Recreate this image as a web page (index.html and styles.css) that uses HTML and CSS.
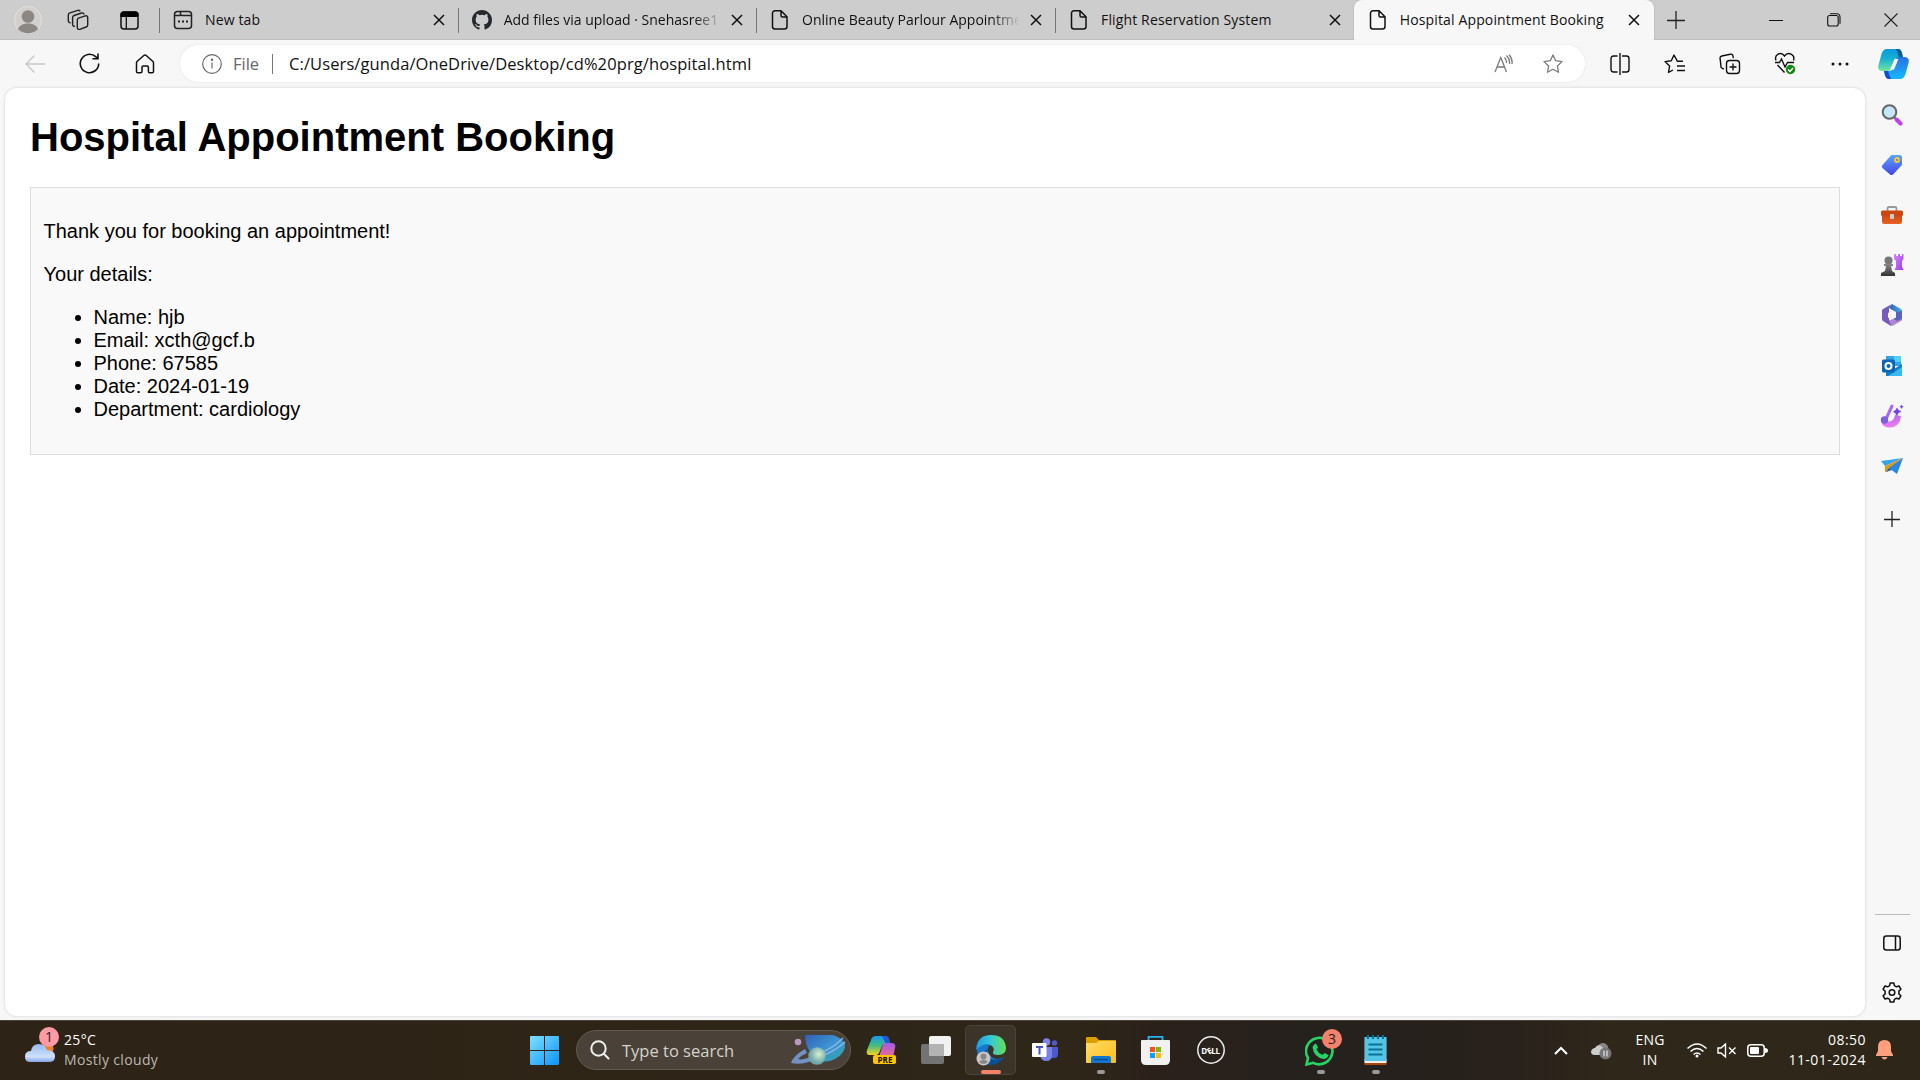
FILE: index.html
```html
<!DOCTYPE html>
<html lang="en">
<head>
<meta charset="utf-8">
<title>Hospital Appointment Booking</title>
<link rel="stylesheet" href="styles.css">
</head>
<body>
<svg width="0" height="0" class="defs">
  <defs>
    <symbol id="doc" viewBox="0 0 18 22"><path d="M4 1.8h6l6 6V17.500a2.500 2.500 0 0 1-2.500 2.500H4a2.500 2.500 0 0 1-2.500-2.500V4.300A2.500 2.500 0 0 1 4 1.800zM10 2v4.500A1.500 1.500 0 0 0 11.500 8H16" fill="none" stroke="#111" stroke-width="1.500"/></symbol>
    <symbol id="x" viewBox="0 0 12 12"><path d="M1 1l10 10M11 1L1 11" stroke="#111" stroke-width="1.500"/></symbol>
    <linearGradient id="gb" x1="0" y1="0" x2="1" y2="1"><stop offset="0" stop-color="#7fe0ff"/><stop offset="1" stop-color="#0a94fb"/></linearGradient>
    <linearGradient id="gc1" x1="0" y1="0" x2="0" y2="1"><stop offset="0" stop-color="#0a9be0"/><stop offset=".45" stop-color="#18b0d0"/><stop offset="1" stop-color="#6fe89a"/></linearGradient>
    <linearGradient id="gc2" x1="0" y1="0" x2="0" y2="1"><stop offset="0" stop-color="#2870e0"/><stop offset="1" stop-color="#16b8ff"/></linearGradient>
    <linearGradient id="gp1" x1="0" y1="0" x2="0" y2="1"><stop offset="0" stop-color="#1598f0"/><stop offset=".5" stop-color="#43bc80"/><stop offset="1" stop-color="#f5d222"/></linearGradient>
    <linearGradient id="gp2" x1="0" y1="0" x2="0" y2="1"><stop offset="0" stop-color="#a25be8"/><stop offset="1" stop-color="#f06a8d"/></linearGradient>
    <linearGradient id="tag" x1="0" y1="0" x2="0" y2="1"><stop offset="0" stop-color="#58a5ff"/><stop offset="1" stop-color="#4444e8"/></linearGradient>
    <linearGradient id="org" x1="0" y1="0" x2="0" y2="1"><stop offset="0" stop-color="#c5420c"/><stop offset="1" stop-color="#ea6226"/></linearGradient>
    <linearGradient id="pur" x1="0" y1="0" x2="1" y2="1"><stop offset="0" stop-color="#d98af8"/><stop offset="1" stop-color="#9d35f5"/></linearGradient>
    <linearGradient id="gry" x1="0" y1="0" x2="0" y2="1"><stop offset="0" stop-color="#888"/><stop offset="1" stop-color="#333"/></linearGradient>
    <linearGradient id="hex" x1="0" y1="0" x2="1" y2="0"><stop offset="0" stop-color="#2b57b5"/><stop offset="1" stop-color="#4cb4ec"/></linearGradient>
    <linearGradient id="mag" x1="0" y1="0" x2="0" y2="1"><stop offset="0" stop-color="#b86cf2"/><stop offset="1" stop-color="#f07cf0"/></linearGradient>
    <linearGradient id="edge" x1="0" y1="0" x2="1" y2="0"><stop offset="0" stop-color="#1a9fe8"/><stop offset=".5" stop-color="#35c8d8"/><stop offset="1" stop-color="#6be050"/></linearGradient>
    <linearGradient id="fold" x1="0" y1="0" x2="1" y2="1"><stop offset="0" stop-color="#ffdc6b"/><stop offset="1" stop-color="#fbbe17"/></linearGradient>
    <linearGradient id="cld" x1="0" y1="0" x2="0" y2="1"><stop offset="0" stop-color="#93b9f2"/><stop offset=".7" stop-color="#cfe0fb"/><stop offset="1" stop-color="#84a5e6"/></linearGradient>
    <linearGradient id="pla" x1="0" y1="0" x2="1" y2="1"><stop offset="0" stop-color="#315fb8"/><stop offset=".5" stop-color="#3d94d2"/><stop offset="1" stop-color="#2ea6a6"/></linearGradient>
    <radialGradient id="moon" cx=".6" cy=".4"><stop offset="0" stop-color="#d9efd0"/><stop offset="1" stop-color="#6fa8a8"/></radialGradient>
  </defs>
</svg>

<header class="tabstrip">
  <div class="slot profile"><svg width="28" height="28" viewBox="0 0 28 28"><circle cx="14" cy="14" r="13.500" fill="#d2d0ce" stroke="#e4e2dc"/><circle cx="14" cy="10.500" r="6.300" fill="#8a8785"/><path d="M4 23c2-7.500 18-7.500 20 0a13.500 13.500 0 0 1-20 0z" fill="#8a8785"/></svg></div>
  <div class="slot spaces"><svg width="22" height="22" viewBox="0 0 22 22" fill="none" stroke="#222" stroke-width="1.400"><path d="M11.500 9.200l6.800-2.300c1.400-.4 2.400.3 2.400 1.700v7.300c0 1-.6 1.800-1.600 2.100l-6.300 2.300c-1.400.4-2.500-.3-2.500-1.800V11.300c0-1 .3-1.800 1.200-2.100z"/><path d="M8 17.200c-1.400.4-2.400-.4-2.400-1.900V8.600c0-1 .6-1.800 1.500-2.100l7.400-2.500c1.300-.3 2.300.1 2.600 1.500M3.700 13.700C2.300 13.900 1.300 13 1.300 11.700V6c0-1 .7-1.800 1.600-2.100l7.900-2.500c1-.3 2 .1 2.400 1"/></svg></div>
  <div class="slot vert"><svg width="19" height="19" viewBox="0 0 19 19"><rect x="1" y="1" width="17" height="17" rx="3" fill="none" stroke="#111" stroke-width="1.500"/><path d="M.5 6V3.500A3 3 0 0 1 3.500.500h12a3 3 0 0 1 3 3V6z"/><path d="M6.300 6v12" stroke="#111" stroke-width="1.300"/></svg></div>
  <div class="tab sep"><div class="fav"><svg width="20" height="20" viewBox="0 0 20 20" fill="none" stroke="#222" stroke-width="1.500"><rect x="1.500" y="1.500" width="17" height="17" rx="3"/><path d="M1.500 5.500h6M7.500 1.500v2.500a1.500 1.500 0 0 0 1.500 1.500h9.500"/><path d="M5 11.500h2M9 11.500h2M13 11.500h2" stroke-width="2"/></svg></div><span class="label">New tab</span><svg class="close" width="12" height="12"><use href="#x"/></svg></div>
  <div class="tab sep"><div class="fav"><svg width="20" height="20" viewBox="0 0 16 16"><path fill="#24292f" d="M8 0C3.580 0 0 3.580 0 8c0 3.540 2.290 6.530 5.470 7.590.4.070.55-.17.55-.38 0-.19-.01-.82-.01-1.490-2.010.37-2.530-.49-2.690-.94-.09-.23-.48-.94-.82-1.130-.28-.15-.68-.52-.01-.53.63-.01 1.080.58 1.230.82.72 1.210 1.870.87 2.330.66.07-.52.28-.87.51-1.070-1.780-.2-3.640-.89-3.640-3.950 0-.87.31-1.590.82-2.150-.08-.2-.36-1.020.08-2.120 0 0 .67-.21 2.200.82a7.600 7.600 0 0 1 4 0c1.530-1.040 2.200-.82 2.200-.82.44 1.100.16 1.920.08 2.120.51.56.82 1.270.82 2.150 0 3.070-1.870 3.750-3.650 3.950.29.25.54.73.54 1.480 0 1.070-.01 1.930-.01 2.200 0 .21.15.46.55.38A8 8 0 0 0 16 8c0-4.420-3.580-8-8-8z"/></svg></div><span class="label fade">Add files via upload · Snehasree1</span><svg class="close" width="12" height="12"><use href="#x"/></svg></div>
  <div class="tab sep"><div class="fav"><svg width="18" height="22"><use href="#doc"/></svg></div><span class="label fade">Online Beauty Parlour Appointme</span><svg class="close" width="12" height="12"><use href="#x"/></svg></div>
  <div class="tab sep"><div class="fav"><svg width="18" height="22"><use href="#doc"/></svg></div><span class="label">Flight Reservation System</span><svg class="close" width="12" height="12"><use href="#x"/></svg></div>
  <div class="tab active"><div class="fav"><svg width="18" height="22"><use href="#doc"/></svg></div><span class="label">Hospital Appointment Booking</span><svg class="close" width="12" height="12"><use href="#x"/></svg></div>
  <div class="slot newtab"><svg width="18" height="18"><path d="M9 0v18M0 9.500h18" stroke="#222" stroke-width="1.300"/></svg></div>
  <div class="winctl">
    <div><svg width="14" height="14"><path d="M0 7.500h14" stroke="#111"/></svg></div>
    <div><svg width="14" height="14" fill="none" stroke="#111" stroke-width="1.100"><rect x=".7" y="2.500" width="10.500" height="10.500" rx="2"/><path d="M3 .8h7a3 3 0 0 1 3 3v7"/></svg></div>
    <div><svg width="14" height="14"><path d="M.5.500l13 13M13.500.500l-13 13" stroke="#222" stroke-width="1.100"/></svg></div>
  </div>
</header>

<nav class="toolbar">
  <div class="tool"><svg width="20" height="18" fill="none" stroke="#c8c8c8" stroke-width="1.400"><path d="M20 9H1M9.500.500L1 9l8.500 8.500"/></svg></div>
  <div class="tool"><svg width="21" height="21" fill="none" stroke="#111" stroke-width="1.600"><path d="M19.700 10.500a9.200 9.200 0 1 1-3-6.800l2.300 2M19 .5v5.300h-5.500"/></svg></div>
  <div class="tool"><svg width="20" height="20" fill="none" stroke="#111" stroke-width="1.500"><path d="M1.500 9c0-.8.300-1.300.8-1.800l6.500-5.700c.8-.7 1.600-.7 2.400 0l6.500 5.700c.5.500.8 1 .8 1.800v8.500c0 .8-.6 1.300-1.300 1.300h-2.500c-.8 0-1.300-.5-1.300-1.300v-4.200c0-.8-.5-1.300-1.300-1.300H8.300c-.8 0-1.300.5-1.300 1.300v4.200c0 .8-.5 1.300-1.300 1.300H2.800c-.8 0-1.300-.5-1.300-1.300z"/></svg></div>
  <div class="address">
    <svg width="20" height="20" fill="none" stroke="#6b6b6b" stroke-width="1.200"><circle cx="10" cy="10" r="9.300"/><path d="M10 8.500v6"/><circle cx="10" cy="5.800" r=".6" fill="#6b6b6b"/></svg>
    <span class="scheme">File</span><span class="bar"></span><span class="url">C:/Users/gunda/OneDrive/Desktop/cd%20prg/hospital.html</span>
    <svg class="read" width="19" height="20" fill="none" stroke="#7a7a7a" stroke-width="1.300"><path d="M1 18L6.800 3.500 12.500 18M3 13h7.700M10.500 3.500c1.500 1.500 2.200 3.500 2 5.500M12.500 1.500c2.500 2.500 3.500 5 3 8.500M15 .7c2.500 2.500 3.500 5.500 3 9.300"/></svg>
    <svg width="20" height="20" viewBox="0 0 20 20" fill="none" stroke="#7a7a7a" stroke-width="1.300" stroke-linejoin="round"><path d="M10 1l2.700 5.700 6.300.9-4.600 4.400 1.100 6.300L10 15.300l-5.500 3 1.100-6.300L1 7.600l6.300-.9z"/></svg>
  </div>
  <div class="tool first"><svg width="20" height="22" fill="none" stroke="#111" stroke-width="1.400"><path d="M7.500 3H3.500A2.500 2.500 0 0 0 1 5.500v11A2.500 2.500 0 0 0 3.500 19h4M12 3h4.500A2.500 2.500 0 0 1 19 5.500v11a2.500 2.500 0 0 1-2.500 2.500H12M10 0v22"/></svg></div>
  <div class="tool"><svg width="21" height="20" fill="none" stroke="#111" stroke-width="1.400" stroke-linejoin="round"><path d="M19 7.200h-5.700L10 1 7.300 6.700 1 7.600l4.600 4.500-1.100 6.200L9 16M13 12h8M13 16.500h8"/></svg></div>
  <div class="tool"><svg width="22" height="22" fill="none" stroke="#111" stroke-width="1.400"><rect x="7.500" y="7.500" width="13" height="13" rx="3"/><path d="M14 10.500v7M10.500 14h7M4.800 16L3.300 15.300c-1.200-.5-1.700-1.500-1.400-2.800L1.100 5.700C.8 4.300 1.500 3.400 2.800 3l8.500-1.800c1.300-.3 2.300.3 2.600 1.600l.5 2.300"/></svg></div>
  <div class="tool"><svg width="22" height="23" fill="none" stroke="#111" stroke-width="1.400"><path d="M2 8.500C-.2 2.500 7-1 10.500 4 14-1 21.500 2.500 19.500 8.500M3.500 13l7 7.500M1 10.500h4.500L7.500 7l3.500 8 2.500-4.500h6.500"/><circle cx="16.500" cy="17.500" r="4.700" fill="#138a13" stroke="none"/><path d="M14 17.500l2 2 3-3.500" stroke="#fff"/></svg></div>
  <div class="tool"><svg width="18" height="4" fill="#111"><circle cx="2" cy="2" r="1.500"/><circle cx="9" cy="2" r="1.500"/><circle cx="16" cy="2" r="1.500"/></svg></div>
  <div class="tool copilot"><svg width="31" height="30" viewBox="0 0 31 30"><path d="M9 0h11q3 0 4 4l1 5h-5q-3.500 0-4.500 3.500L13.500 19q-1 3-4 3H5q-6 0-4.500-6L3.500 5Q5 0 9 0z" fill="url(#gc1)"/><path d="M17 0h3q3 0 4 4l1 5h-4q-2-9-4-9z" fill="#0c5a92"/><path d="M22 30H11q-3 0-4-4l-1-4h5q3.500 0 4.500-3.500L17.500 11q1-3 4-3H26q6 0 4.500 6l-3 11Q26 30 22 30z" fill="url(#gc2)"/><path d="M14 30h-3q-3 0-4-4l-1-4h4q2 8 4 8z" fill="#1448d8"/><path d="M17 10h3.500L16 20.500h-4z" fill="#f7f7f7"/></svg></div>
</nav>

<div class="browser">
  <main class="page">
    <h1>Hospital Appointment Booking</h1>
    <section class="result">
      <p>Thank you for booking an appointment!</p>
      <p>Your details:</p>
      <ul>
        <li>Name: hjb</li>
        <li>Email: xcth@gcf.b</li>
        <li>Phone: 67585</li>
        <li>Date: 2024-01-19</li>
        <li>Department: cardiology</li>
      </ul>
    </section>
  </main>
  <aside class="sidebar">
    <div><svg width="22" height="22"><path d="M13.500 13.500l2 2" stroke="#555" stroke-width="2"/><path d="M15.500 15.500l4 4" stroke="#c63df0" stroke-width="4" stroke-linecap="round"/><circle cx="8.500" cy="8" r="6.800" fill="#c5e6fb" stroke="#666" stroke-width="2"/></svg></div>
    <div><svg width="22" height="22"><path d="M11 1h7.500Q21 1 21 3.500V10q0 1-1 2l-8 8.500q-1.500 1-3 0L1.500 14q-1.500-1.500 0-3l8-9Q10 1 11 1z" fill="url(#tag)"/><circle cx="16" cy="6" r="2" fill="#6a86e0" stroke="#ffc928" stroke-width="1.800"/></svg></div>
    <div><svg width="24" height="20"><path d="M7.500 6V3.500Q7.500 2 9 2h6q1.500 0 1.500 1.500V6" fill="none" stroke="#999" stroke-width="1.800"/><rect x="2" y="8" width="20" height="11" rx="2" fill="url(#org)"/><rect x="1" y="5.500" width="22" height="5.500" rx="1.500" fill="#cb4710"/><rect x="10" y="9" width="4" height="5" rx="1" fill="#ccc"/></svg></div>
    <div><svg width="24" height="24"><path d="M14 1h2v2h2V1h2v2h2V1h1.500v5L22 8v6l1.500 3h-9L16 14V8l-2-2z" fill="url(#pur)"/><circle cx="8.500" cy="7.500" r="4" fill="#777"/><path d="M4 11h9v2h-2l1 5 3 2v3H1v-3l4-2 1-5H4z" fill="url(#gry)"/></svg></div>
    <div><svg width="22" height="24" viewBox="0 0 22 24"><path d="M11 1l9 5q1 .6 1 2v8l-6-3V9L8 5z" fill="url(#hex)"/><path d="M21 8v8q0 1.400-1 2l-8 4.500q-1 .5-2 0l-5-3 11-6z" fill="#b183d3"/><path d="M11 1L8 5v11l2 7-8-5q-1-.6-1-2V8q0-1.400 1-2z" fill="#765bbd"/><path d="M15 9l6-1v8l-5 2-5-3 4-3z" fill="#5267bd"/><path d="M11 8l4 2v4.500l-4 2-4-2V10z" fill="#f7f7f7"/></svg></div>
    <div><svg width="22" height="22"><rect x="5" y="1" width="15" height="10" fill="#2fa6e8"/><path d="M13 1h7v6h-7z" fill="#50d1f5"/><path d="M5 10l8 4 8-5v12H5z" fill="#177cc5"/><path d="M7 21l14-9v9z" fill="#36b9ec"/><rect x="1" y="4.500" width="13" height="13" rx="1.500" fill="#0867b8"/><circle cx="7.500" cy="11" r="3" fill="none" stroke="#fff" stroke-width="2"/></svg></div>
    <div><svg width="24" height="24"><path d="M4 15q1 3 5 2.500 5-.5 6-6.500l6 1q-1 11-11 11.500-7 0-8.500-5z" fill="url(#mag)"/><path d="M12 2L6 15" stroke="#a66bf2" stroke-width="3" stroke-linecap="round"/><circle cx="4.500" cy="16" r="3.700" fill="#7a62d8"/><path d="M17 3.500l1.500 2.500 3 1.500-3 1.500L17 12l-2-3-2-1.500 2.500-1.500zM21.500.5l.8 1.500 1.500.8-1.500.7-.8 1.500-.7-1.500-1.500-.7 1.500-.8z" fill="#7540e8"/></svg></div>
    <div><svg width="24" height="18"><path d="M1 4l22-3-18 8z" fill="#35a4ee"/><path d="M5 9L23 1 8 14l-3 1z" fill="#dc9a19"/><path d="M9 11L23 1l-6 16z" fill="#2688e5"/><path d="M6 15l3-4 3 2z" fill="#1763b3"/></svg></div>
    <div class="add"><svg width="16" height="16"><path d="M8 0v16M0 8.500h16" stroke="#222" stroke-width="1.300"/></svg></div>
    <div class="spacer"></div>
    <hr>
    <div class="panel"><svg width="18" height="16" fill="none" stroke="#111" stroke-width="1.500"><rect x=".8" y="1" width="16.400" height="14" rx="2.500"/><path d="M12.500 1v14"/></svg></div>
    <div><svg width="22" height="22" viewBox="0 0 22 22" fill="none" stroke="#111" stroke-width="1.500" stroke-linejoin="round"><path d="M9.200 1h3.600l.6 2.700 2 1.100 2.600-.8 1.900 3.200-2 1.900v2.800l2 1.900-1.900 3.200-2.600-.8-2 1.200-.6 2.600H9.200l-.6-2.600-2-1.200-2.600.8-1.900-3.200 2-1.900V9.100l-2-1.900L4 4l2.600.8 2-1.100z"/><circle cx="11" cy="10.500" r="2.800"/></svg></div>
  </aside>
</div>

<footer class="taskbar">
  <div class="weather">
    <svg width="38" height="32"><circle cx="26" cy="15" r="6.500" fill="#f08022"/><path d="M9 28Q4 28 4 22.500 4 17 10 17q1-7 8-7 6 0 8 6 8 0 8 6.500Q34 28 28 28z" fill="url(#cld)"/></svg>
    <span class="badge pink">1</span>
    <div class="two"><span>25°C</span><span class="dim">Mostly cloudy</span></div>
  </div>
  <div class="task start"><svg width="29" height="29"><path d="M1 0h13v14H0V1q0-1 1-1zM15 0h13q1 0 1 1v13H15zM0 15h14v14H1q-1 0-1-1zM15 15h14v13q0 1-1 1H15z" fill="url(#gb)"/></svg></div>
  <div class="search">
    <svg width="20" height="20" fill="none" stroke="#f0f0f0" stroke-width="2" stroke-linecap="round"><circle cx="8.500" cy="8.500" r="7.200"/><path d="M13.800 13.800l4.700 4.700"/></svg>
    <span>Type to search</span>
    <svg class="planet" width="56" height="32"><path d="M15 1h28q9 3 12 9 1 9-10 15-10 5-19 0Q15 15 15 1z" fill="url(#pla)"/><path d="M30 19Q42 15 53 4M32 22Q45 17 55 8" stroke="#8cb5e8" stroke-width="1.500" fill="none"/><path d="M15 15Q3 22 1 29q12 3 27-5l-3-4Q15 27 8 25q4-4 9-6z" fill="#7391c3"/><circle cx="8" cy="8" r="3.300" fill="#b999bd"/><circle cx="27" cy="22" r="8.700" fill="url(#moon)"/></svg>
  </div>
  <div class="task pre"><svg width="30" height="30"><path d="M5 5q1-4 5-4h9q3 0 4 3l1 5h-5q-2.500 0-3.500 3l-2 5q-1 3-4 3H4q-4.500 0-3-5z" fill="url(#gp1)"/><path d="M16 1h3q3 0 4 3l1 5h-4z" fill="#2058d8"/><path d="M19 8h6q5.500 0 4 5l-2 9H13l3-10q1-4 3-4z" fill="url(#gp2)"/><rect x="7" y="20" width="23" height="9" rx="2" fill="#ffc400"/></svg><b>PRE</b></div>
  <div class="task"><svg width="30" height="28"><rect x="0" y="8" width="23" height="20" rx="2" fill="#737373"/><rect x="8" y="0" width="22" height="20" rx="2" fill="#f1f1f1"/><path d="M8 8h15v12H10q-2 0-2-2z" fill="#b3b3b3"/></svg></div>
  <div class="task on"><svg width="32" height="32" viewBox="0 0 32 32"><path d="M2 13Q1 25 12 29q9 3 17-6-10 5-15-3Q11 14 15 11 8 7 2 13z" fill="#1579cf"/><path d="M1 16Q2 1 16 1q14 0 15 13 0 7-8 7-6 0-5-3 2-3-1-6Q10 7 1 16z" fill="url(#edge)"/><path d="M12 15q-2 8 4 10 6 2 13-2-6 9-15 8-8-3-6-10 1-4 4-6z" fill="#0d4f95"/><circle cx="8.500" cy="24.500" r="7" fill="#c9c7c5"/><circle cx="8.500" cy="22.500" r="3" fill="#888"/><path d="M4 28q4.500-5 9 0-4.500 4-9 0z" fill="#888"/></svg></div>
  <div class="task"><svg width="27" height="24"><circle cx="14.500" cy="4" r="3.800" fill="#7b83eb"/><circle cx="22.500" cy="5" r="2.700" fill="#5059c9"/><path d="M18 9h8v7q0 4-4 4h-4z" fill="#5059c9"/><path d="M9 9h11v8q0 6-6 6-5 0-6-6z" fill="#7b83eb"/><rect x="0" y="5" width="14.500" height="14" rx="1" fill="#fff"/><path d="M4 9h7M7.500 9v7.500" stroke="#4b53bc" stroke-width="2"/></svg></div>
  <div class="task run"><svg width="30" height="28"><path d="M0 2q0-1 1-1h9l3 3h16q1 0 1 1v5H0z" fill="#dda000"/><path d="M0 7h10l3-2h16q1 0 1 1v20q0 1-1 1H1q-1 0-1-1z" fill="url(#fold)"/><path d="M5 27v-5q0-2 2-2h16q2 0 2 2v5z" fill="#1377cf"/><path d="M8 23.500h14" stroke="#084e91" stroke-width="1.500"/></svg></div>
  <div class="task"><svg width="29" height="30"><path d="M7.500 6V1.800h14V6" fill="none" stroke="#26b2ef" stroke-width="1.800"/><path d="M1 5h27q1 0 1 1v19q0 5-5 5H5q-5 0-5-5V6q0-1 1-1z" fill="#f1f1f1"/><path d="M9 12h5v5H9z" fill="#f25022"/><path d="M15 12h5v5h-5z" fill="#7fba00"/><path d="M9 18h5v5H9z" fill="#00a4ef"/><path d="M15 18h5v5h-5z" fill="#ffb900"/></svg></div>
  <div class="task"><svg width="28" height="28"><circle cx="14" cy="14" r="13.200" fill="none" stroke="#eee" stroke-width="1.500"/></svg><b class="dell">D<i>E</i>LL</b></div>
  <div class="task wa run"><svg width="31" height="31" fill="none" stroke="#25d366"><path d="M3 23L1.500 29.500l6.700-1.700A13.200 13.200 0 1 0 3 23z" stroke-width="2.600"/><path d="M11 8.500l2 4-1.500 2q2 4 6 5.500l2-2 4 2q-1 4-5 4-10-2-11-12 1-3 3.500-3.500z" fill="#25d366" stroke="none"/></svg><span class="badge coral">3</span></div>
  <div class="task run"><svg width="23" height="30"><rect x=".5" y="4" width="22" height="26" rx="1" fill="#a44b0c"/><path d="M.5 24h22v4H.5z" fill="#eee"/><rect x=".5" y="2" width="22" height="24" fill="#55c5e5"/><path d="M4 0v4M9 0v4M14 0v4M19 0v4" stroke="#087394" stroke-width="2"/><path d="M4.500 9.500h14M4.500 14.500h14M4.500 19.500h14" stroke="#087394" stroke-width="1.800"/></svg></div>
  <div class="tray">
    <svg class="caret" width="14" height="9" fill="none" stroke="#fff" stroke-width="2"><path d="M1 8l6-6 6 6"/></svg>
    <svg class="cloud" width="21" height="19"><path d="M7 5q3-5 8-2 3 2 2 7H7z" fill="#888"/><path d="M4 14Q0 14 0 10.500 1 7 4 7q2-4 6-2 2 1 3 4v5z" fill="#ccc"/><circle cx="14.500" cy="12.500" r="6" fill="#757575"/><path d="M13 9.500v6M16 9.500v6" stroke="#fff"/></svg>
    <div class="two lang"><span>ENG</span><span>IN</span></div>
    <svg class="wifi" width="20" height="15" fill="none" stroke="#fff" stroke-width="1.500"><path d="M.5 5.500q9.500-9 19 0M3.500 8.500q6.500-6 13 0M6.500 11.500q3.500-3 7 0"/><circle cx="10" cy="13" r="1.500" fill="#fff" stroke="none"/></svg>
    <svg class="vol" width="20" height="15" fill="none" stroke="#fff" stroke-width="1.400"><path d="M1 5h3l4.500-4v13L4 10H1zM12 4.500l6.500 6.500M18.500 4.500L12 11"/></svg>
    <svg class="bat" width="21" height="13"><rect x=".8" y=".8" width="16.400" height="11.400" rx="3" fill="none" stroke="#fff" stroke-width="1.500"/><rect x="3" y="3" width="9" height="7" rx="1" fill="#fff"/><path d="M18 4q3 0 3 2.500T18 9z" fill="#fff"/></svg>
    <div class="two clock"><span>08:50</span><span>11-01-2024</span></div>
    <svg class="bell" width="17" height="20"><path d="M8.500 0Q15 0 15 7v4l2 4v1H0v-1l2-4V7Q2 0 8.500 0zM5.500 17h6q-1 2.500-3 2.500t-3-2.500z" fill="#ff9f7e"/></svg>
  </div>
</footer>
</body>
</html>
```

FILE: styles.css
```css
* { box-sizing: border-box; }
body {
  margin: 0;
  width: 1920px;
  height: 1080px;
  overflow: hidden;
  display: flex;
  flex-direction: column;
  background: #f7f7f7;
  color: #111;
  font-family: "Open Sans", "Noto Sans", sans-serif;
  font-size: 14px;
}
svg { display: block; flex: none; }
.defs { position: absolute; }

/* Tab strip */
.tabstrip {
  height: 40px;
  display: flex;
  background: #cdcdcd;
  box-shadow: inset 0 -1px #c0c0c0;
}
.slot { display: flex; align-items: center; justify-content: center; }
.profile { width: 56px; }
.spaces { width: 43px; }
.vert { width: 60px; }
.tab {
  width: 298.700px;
  padding: 0 13px;
  display: flex;
  align-items: center;
  background: linear-gradient(#777, #777) 0 8px / 1px 25px no-repeat;
}
.tab.active {
  background: #f7f7f7;
  border-radius: 8px 8px 0 0;
  box-shadow: 0 0 2px #aaa;
  clip-path: inset(0 -2px 0 -2px);
  width: 300px;
}
.fav { width: 22px; display: flex; justify-content: center; margin-right: 11px; }
.label { width: 217px; white-space: nowrap; margin-right: 11px; line-height: 20px; letter-spacing: .14px; }
.fade { letter-spacing: 0; -webkit-mask-image: linear-gradient(90deg, #000 190px, transparent 218px); mask-image: linear-gradient(90deg, #000 190px, transparent 218px); }
.newtab { width: 44px; }
.winctl { margin-left: auto; display: flex; }
.winctl div { width: 57.500px; display: flex; align-items: center; justify-content: center; }

/* Toolbar */
.toolbar { height: 47px; display: flex; align-items: center; padding-left: 7px; }
.tool { width: 55px; height: 46px; display: flex; align-items: center; justify-content: center; }
.tool.first { margin-left: 7px; }
.tool.copilot { width: 52px; }
.address {
  width: 1405px;
  height: 37px;
  margin-left: 8px;
  padding: 0 22px 0 22px;
  display: flex;
  align-items: center;
  background: #fff;
  border-radius: 19px;
  box-shadow: 0 0 3px #e5e5e5;
  font-size: 16.500px;
}
.scheme { margin-left: 11px; width: 30px; color: #666; }
.bar { width: 1px; height: 20px; margin: 0 16px 0 9px; background: #777; }
.url { color: #111; letter-spacing: .1px; }
.read { margin: 0 30px 0 auto; }

/* Page and sidebar */
.browser { height: 933px; display: flex; padding: 1px 0 4px 5px; }
.page {
  width: 1860px;
  padding: 26px 25px 0;
  background: #fff;
  border-radius: 12px;
  box-shadow: 0 0 3px #ccc;
  color: #000;
  font-family: "Liberation Sans", Arial, sans-serif;
  font-size: 20px;
  line-height: 23px;
}
h1 { margin: 0 0 27px; font-size: 40px; line-height: 46px; }
.result { height: 268px; padding: 12px 12.500px; border: 1px solid #ddd; background: #f9f9f9; }
.result p { margin: 20px 0; }
.result ul { margin: 20px 0; padding-left: 50px; }
.sidebar { width: 54px; padding-top: 2px; display: flex; flex-direction: column; }
.sidebar div { height: 50.100px; display: flex; align-items: center; justify-content: center; }
.sidebar .add { margin-top: 3px; }
.sidebar .spacer { flex: 1; }
.sidebar hr { width: 35px; margin: 0 10px 3px; border: 0; border-top: 1px solid #bbb; }
.sidebar > :last-child { margin-bottom: -2px; }

/* Taskbar */
.taskbar {
  height: 60px;
  display: flex;
  align-items: center;
  padding-bottom: 1px;
  background: linear-gradient(90deg, #2d2316 0%, #2e2618 56%, #2b211b 60%, #25211d 68%, #28211c 78%, #2f271a 84%, #2e2618 100%);
  border-top: 1px solid #4a443a;
  color: #fff;
}
.weather { width: 517px; padding-left: 21px; display: flex; align-items: center; position: relative; }
.weather .two { margin-left: 5px; letter-spacing: .35px; }
.two { display: flex; flex-direction: column; line-height: 20px; }
.dim { color: #bcb8b3; }
.badge {
  position: absolute;
  width: 20px;
  height: 20px;
  border-radius: 50%;
  color: #222;
  line-height: 20px;
  text-align: center;
}
.pink { left: 39px; top: -3px; background: #ff99a4; }
.coral { left: 29px; top: 4px; background: #f4816a; }
.task { width: 55px; height: 50px; display: flex; align-items: center; justify-content: center; position: relative; }
.start { width: 59px; padding-right: 4px; }
.search {
  width: 275px;
  height: 40px;
  padding: 0 4px 0 13px;
  display: flex;
  align-items: center;
  border: 1px solid #625b52;
  border-radius: 20px;
  background: #4a4238;
  color: #d5d1cd;
  font-size: 16.500px;
}
.search span { margin-left: 12px; }
.planet { margin-left: auto; }
.pre { margin-left: 2px; }
.pre b { position: absolute; left: 21px; top: 29px; width: 22px; text-align: center; font-size: 8px; line-height: 12px; color: #111; }
.dell { position: absolute; font-size: 8px; letter-spacing: -.3px; }
.dell i { display: inline-block; font-style: normal; transform: rotate(-30deg); }
.on::before { content: ""; position: absolute; inset: 0 2px; border: 1px solid #4b443a; border-radius: 5px; background: #3c3428; }
.on svg { position: relative; }
.on::after, .run::after { content: ""; position: absolute; bottom: 1px; height: 4px; border-radius: 2px; background: #999; width: 8px; }
.on::after { width: 20px; background: #f4816a; }
.wa { margin-left: 55px; }
.tray { margin-left: auto; display: flex; align-items: center; padding-right: 27px; }
.cloud { margin-left: 23px; }
.lang { width: 40px; margin: 0 17px 0 18px; align-items: center; letter-spacing: .2px; }
.vol { margin-left: 10px; }
.bat { margin-left: 10px; }
.clock { width: 98px; align-items: flex-end; letter-spacing: .45px; }
.bell { margin-left: 10px; }
```
